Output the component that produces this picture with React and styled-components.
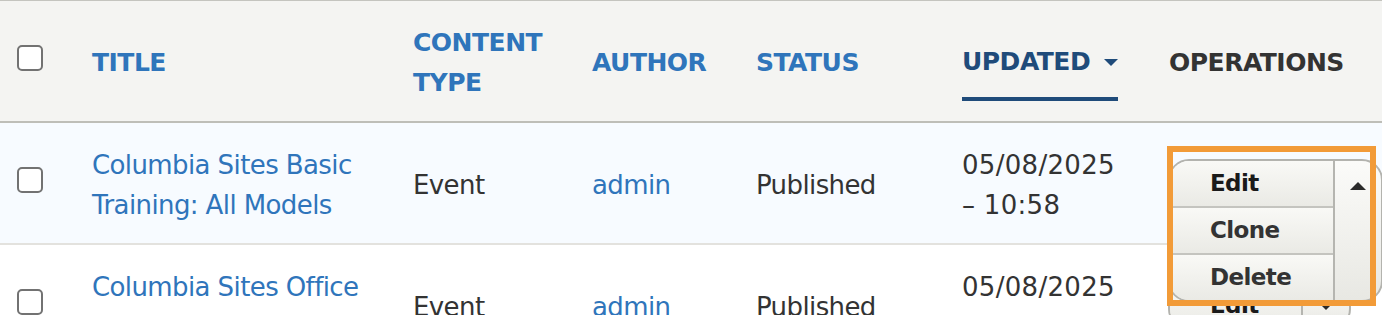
import React from 'react';
import styled, { createGlobalStyle } from 'styled-components';

const GlobalStyle = createGlobalStyle`
  html, body {
    margin: 0;
    padding: 0;
    background: #ffffff;
    overflow: hidden;
  }
  body {
    font-family: "DejaVu Sans", "Liberation Sans", sans-serif;
    color: #333333;
  }
`;

const COLUMNS = '68px 321px 179px 164px 206px 208px 236px';

// table shell
const Table = styled.div`
  width: 1382px;
  border-top: 1px solid #c4c4bf;
`;

const HeaderRow = styled.div`
  display: grid;
  grid-template-columns: ${COLUMNS};
  height: 120px;
  background: #f4f4f2;
  border-bottom: 2px solid #bebeb8;
`;

const HeadCell = styled.div`
  display: flex;
  align-items: center;
  padding: 4px ${(p) => p.$right ?? 12}px 0 ${(p) => p.$left ?? 24}px;
  font-size: 25px;
  font-weight: bold;
  line-height: 40px;
  letter-spacing: -0.5px;
  color: ${(p) => (p.$plain ? '#333333' : '#2f75bb')};
`;

const SortLink = styled.span`
  display: inline-flex;
  align-items: center;
  gap: 14px;
  padding: 17px 0 15px;
  border-bottom: 4px solid #1f4b7a;
  color: #1f4b7a;
`;

const BodyRow = styled.div`
  display: grid;
  grid-template-columns: ${COLUMNS};
  background: ${(p) => p.$bg || '#ffffff'};
  border-bottom: 2px solid #e3e2de;
`;

const Cell = styled.div`
  display: flex;
  align-items: center;
  padding: 22px ${(p) => p.$right ?? 12}px 18px ${(p) => p.$left ?? 24}px;
  font-size: 26px;
  line-height: 40px;
  letter-spacing: ${(p) => p.$spacing ?? '-0.6px'};
  color: ${(p) => (p.$link ? '#2f75bb' : '#333333')};
`;

const Checkbox = styled.input.attrs({ type: 'checkbox' })`
  appearance: none;
  box-sizing: border-box;
  width: 26px;
  height: 26px;
  margin: ${(p) => (p.$head ? -10 : -10)}px 0 0 0;
  border: 2px solid #727272;
  border-radius: 5px;
  background: #ffffff;
`;

// dropbutton
const DropWrap = styled.div`
  position: relative;
  height: 49px;
  margin-top: -4px;
`;

const Widget = styled.div`
  position: relative;
  z-index: ${(p) => (p.$open ? 5 : 1)};
  display: flex;
  align-items: stretch;
  border: 2px solid #b3b3ae;
  border-radius: 21px;
  overflow: hidden;
  background: linear-gradient(to bottom, #fbfbf9, #e8e8e3);
`;

const ItemList = styled.div`
  display: flex;
  flex-direction: column;
`;

const Item = styled.div`
  display: flex;
  align-items: center;
  height: 45px;
  padding: 0 42px 0 40px;
  font-size: 23px;
  font-weight: bold;
  color: ${(p) => (p.$first ? '#1a1a1a' : '#333333')};
  background: linear-gradient(to bottom, #f9f9f6, #eaeae5);
  & + & {
    border-top: 2px solid #c4c4bf;
  }
`;

const Toggle = styled.div`
  width: 46px;
  display: flex;
  justify-content: center;
  align-items: flex-start;
  padding-top: ${(p) => (p.$open ? 21 : 19)}px;
  border-left: 2px solid #b5b5b0;
`;

const Highlight = styled.div`
  position: absolute;
  z-index: 6;
  top: -13px;
  left: -1px;
  width: 209px;
  height: 160px;
  box-sizing: border-box;
  border: 6px solid #f29b38;
  pointer-events: none;
`;

function Arrow({ up, color = '#2a2a2a', w = 16, h = 8 }) {
  return (
    <svg width={w} height={h} viewBox="0 0 16 8" style={{ display: 'block' }}>
      <path d={up ? 'M0 8 L8 0 L16 8 Z' : 'M0 0 L16 0 L8 8 Z'} fill={color} />
    </svg>
  );
}

function Dropbutton({ open, highlighted }) {
  const actions = open ? ['Edit', 'Clone', 'Delete'] : ['Edit'];
  return (
    <DropWrap>
      <Widget $open={open}>
        <ItemList>
          {actions.map((a, i) => (
            <Item key={a} $first={i === 0}>{a}</Item>
          ))}
        </ItemList>
        <Toggle $open={open}>
          <Arrow up={open} />
        </Toggle>
      </Widget>
      {highlighted && <Highlight />}
    </DropWrap>
  );
}

const rows = [
  {
    id: 1,
    title: 'Columbia Sites Basic Training: All Models',
    type: 'Event',
    author: 'admin',
    status: 'Published',
    updated: '05/08/2025 – 10:58',
    open: true,
    bg: '#f7fbff',
  },
  {
    id: 2,
    title: 'Columbia Sites Office Hours',
    type: 'Event',
    author: 'admin',
    status: 'Published',
    updated: '05/08/2025 – 10:42',
    open: false,
  },
];

export default function App() {
  return (
    <>
      <GlobalStyle />
      <Table>
        <HeaderRow>
          <HeadCell $left={17}>
            <Checkbox $head />
          </HeadCell>
          <HeadCell>TITLE</HeadCell>
          <HeadCell $right={10}>CONTENT TYPE</HeadCell>
          <HeadCell>AUTHOR</HeadCell>
          <HeadCell>STATUS</HeadCell>
          <HeadCell>
            <SortLink>
              UPDATED
              <Arrow color="#1f4b7a" w={14} h={9} />
            </SortLink>
          </HeadCell>
          <HeadCell $plain $left={23}>OPERATIONS</HeadCell>
        </HeaderRow>

        {rows.map((r) => (
          <BodyRow key={r.id} $bg={r.bg}>
            <Cell $left={17}>
              <Checkbox />
            </Cell>
            <Cell $link>{r.title}</Cell>
            <Cell>{r.type}</Cell>
            <Cell $link>{r.author}</Cell>
            <Cell>{r.status}</Cell>
            <Cell $spacing="0.3px">{r.updated}</Cell>
            <Cell $left={22}>
              <Dropbutton open={r.open} highlighted={r.open} />
            </Cell>
          </BodyRow>
        ))}
      </Table>
    </>
  );
}
